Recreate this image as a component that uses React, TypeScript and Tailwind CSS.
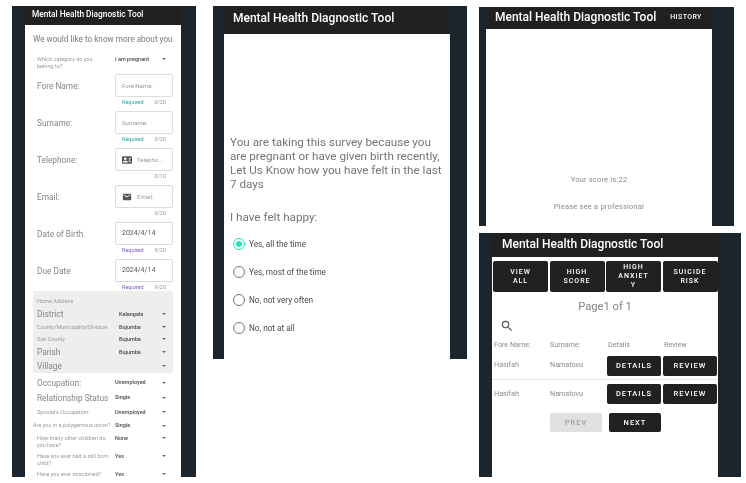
import { MdContactPhone, MdEmail, MdSearch } from "react-icons/md";
import type { ReactNode } from "react";

function Caret() {
  return <span className="h-0 w-0 border-x-[2.5px] border-t-[2.5px] border-x-transparent border-t-[#666]" />;
}

function AppBar({ title, className, extra }: { title: string; className: string; extra?: ReactNode }) {
  return (
    <div className={`flex shrink-0 items-center bg-[#212121] font-medium text-white ${className}`}>
      <span>{title}</span>
      {extra}
    </div>
  );
}

function InputRow({
  label,
  placeholder,
  icon,
  value,
  count = "0/20",
  required,
  purple,
}: {
  label: string;
  placeholder?: string;
  icon?: ReactNode;
  value?: string;
  count?: string;
  required?: boolean;
  purple?: boolean;
}) {
  return (
    <div className="h-[37px] shrink-0 pl-[12px]">
      <div className="flex items-start">
        <span className="w-[78px] pt-[6px] text-[8.3px] leading-[12px] text-[#858585]">{label}</span>
        <div className="flex h-[23px] w-[58px] items-center rounded-[2px] border border-[#dcdcdc] pl-[6px]">
          {icon}
          {value ? (
            <span className="text-[7px] text-[#555]">{value}</span>
          ) : (
            <span className="truncate text-[6px] text-[#999]">{placeholder}</span>
          )}
        </div>
      </div>
      <div className="mt-[1px] flex w-[136px] pl-[85px] pr-[7px] text-[5.5px] leading-[8px]">
        {required && <span className={purple ? "text-[#7e57c2]" : "text-[#26a69a]"}>Required</span>}
        <span className="ml-auto text-[#999]">{count}</span>
      </div>
    </div>
  );
}

function SelectRow({
  label,
  value,
  h,
  big,
  grey,
  pl = "pl-[12px]",
  valueX = "w-[78px]",
  top,
}: {
  label: string;
  value?: string;
  h: string;
  big?: boolean;
  grey?: boolean;
  pl?: string;
  valueX?: string;
  top?: boolean;
}) {
  return (
    <div className={`flex shrink-0 ${top ? "items-start" : "items-center"} ${h} ${grey ? "pl-[4px] pr-[7px]" : `${pl} pr-[15px]`}`}>
      <span
        className={`shrink-0 ${grey ? "w-[82px]" : valueX} ${top ? "pr-[6px]" : "whitespace-nowrap"} ${
          big ? "text-[8.3px] leading-[12px] text-[#858585]" : "text-[5.5px] leading-[6.5px] text-[#9a9a9a]"
        }`}
      >
        {label}
      </span>
      <span className="text-[5.5px] leading-[6.5px] font-medium text-[#4a4a4a]">{value}</span>
      <span className={`ml-auto flex ${top ? "pt-[2px]" : ""}`}>
        <Caret />
      </span>
    </div>
  );
}

function FormPanel() {
  return (
    <div className="flex h-[471px] w-[184px] shrink-0 flex-col overflow-hidden bg-[#1b252d] pl-[13px] pr-[15px]">
      <AppBar title="Mental Health Diagnostic Tool" className="h-[19px] pb-[2px] pl-[7px] text-[8.3px]" />
      <div className="flex min-h-0 flex-1 flex-col bg-white">
        <p className="mt-[8px] h-[23px] shrink-0 pl-[8px] text-[8.2px] leading-[12px] text-[#7a7a7a]">
          We would like to know more about you
        </p>
        <div className="flex h-[18px] shrink-0 pl-[12px] pr-[15px]">
          <span className="w-[78px] pr-[14px] text-[5.5px] leading-[6.5px] text-[#9a9a9a]">
            Which category do you belong to?
          </span>
          <span className="text-[5.5px] leading-[6.5px] font-medium text-[#4a4a4a]">I am pregnant</span>
          <span className="ml-auto flex pt-[2px]">
            <Caret />
          </span>
        </div>
        <InputRow label="Fore Name:" placeholder="Fore Name:" required />
        <InputRow label="Surname:" placeholder="Surname:" required />
        <InputRow
          label="Telephone:"
          placeholder="Telepho..."
          count="0/10"
          icon={<MdContactPhone className="mr-[5px] size-[10px] shrink-0 text-[#555]" />}
        />
        <InputRow
          label="Email:"
          placeholder="Email:"
          icon={<MdEmail className="mr-[5px] size-[10px] shrink-0 text-[#555]" />}
        />
        <InputRow label="Date of Birth" value="2024/4/14" count="9/20" required purple />
        <InputRow label="Due Date" value="2024/4/14" count="9/20" required purple />
        <div className="mx-[8px] -mt-[5px] flex h-[82px] shrink-0 flex-col bg-[#eeeeee] pt-[6px]">
          <span className="h-[10px] pl-[4px] text-[5.5px] leading-[8px] text-[#9a9a9a]">Home Address</span>
          <SelectRow label="District" value="Kalangala" big grey h="h-[14px]" />
          <SelectRow label="County/Municipality/Division" value="Bujumba" grey h="h-[12px]" />
          <SelectRow label="Sub County" value="Bujumba" grey h="h-[12px]" />
          <SelectRow label="Parish" value="Bujumba" big grey h="h-[14px]" />
          <SelectRow label="Village" big grey h="h-[14px]" />
        </div>
        <SelectRow label="Occupation:" value="Unemployed" big h="mt-[2px] h-[15px]" />
        <SelectRow label="Relationship Status" value="Single" big h="h-[15px]" />
        <SelectRow label="Spouse's Occupation:" value="Unemployed" h="h-[14px]" />
        <SelectRow label="Are you in a polygamous union?" value="Single" h="h-[13px]" pl="pl-[8px]" valueX="w-[82px]" />
        <SelectRow label="How many other children do you have?" value="None" h="mt-[3px] h-[18px]" top />
        <SelectRow label="Have you ever had a still born child?" value="Yes" h="h-[18px]" top />
        <SelectRow label="Have you ever miscarried?" value="Yes" h="h-[6px]" />
      </div>
    </div>
  );
}

const options = ["Yes, all the time", "Yes, most of the time", "No, not very often", "No, not at all"];

function SurveyPanel() {
  return (
    <div className="flex h-[353px] w-[254px] shrink-0 flex-col bg-[#1b252d] pl-[11px] pr-[17px]">
      <AppBar title="Mental Health Diagnostic Tool" className="h-[28px] pb-[4px] pl-[9px] text-[12px]" />
      <div className="flex-1 bg-white px-[6px] pt-[101px]">
        <p className="text-[11.7px] leading-[14px] text-[#757575]">
          You are taking this survey because you are pregnant or have given birth recently, Let Us Know how you have
          felt in the last 7 days
        </p>
        <p className="mt-[19px] text-[11.7px] leading-[14px] text-[#757575]">I have felt happy:</p>
        <div className="mt-[6px] flex flex-col pl-[3px]">
          {options.map((option, i) => (
            <label key={option} className="flex h-[28px] items-center gap-[4px] text-[8.2px] text-[#4a4a4a]">
              <span
                className={`flex size-[12px] items-center justify-center rounded-full border ${
                  i === 0 ? "border-[#1de9b6]" : "border-[#757575]"
                }`}
              >
                {i === 0 && <span className="size-[6px] rounded-full bg-[#1de9b6]" />}
              </span>
              {option}
            </label>
          ))}
        </div>
      </div>
    </div>
  );
}

function ScorePanel() {
  return (
    <div className="flex h-[219px] w-[255px] flex-col bg-[#1b252d] pl-[7px] pr-[22px]">
      <AppBar
        title="Mental Health Diagnostic Tool"
        className="h-[22px] pb-[2px] pl-[9px] text-[12px]"
        extra={<span className="ml-[14px] text-[7px] tracking-[0.4px]">HISTORY</span>}
      />
      <div className="flex flex-1 flex-col items-center bg-white pt-[145px] text-[7.5px] tracking-[0.2px] text-[#8a8a8a]">
        <p>Your score is:22</p>
        <p className="mt-[16px]">Please see a professional</p>
      </div>
    </div>
  );
}

const tabs = ["VIEW\nALL", "HIGH\nSCORE", "HIGH\nANXIET\nY", "SUICIDE\nRISK"];
const rows = ["Hasifah", "Hasifah"];

function DarkButton({ label, className }: { label: string; className: string }) {
  return (
    <span
      className={`flex items-center justify-center rounded-[2px] bg-[#212121] font-medium tracking-[1px] text-white ${className}`}
    >
      {label}
    </span>
  );
}

function HistoryPanel() {
  return (
    <div className="flex h-[244px] w-[262px] flex-col bg-[#1b252d] pl-[13px] pr-[23px]">
      <AppBar title="Mental Health Diagnostic Tool" className="h-[24px] pb-[2px] pl-[10px] text-[12px]" />
      <div className="flex flex-1 flex-col bg-white">
        <div className="mt-[4px] flex gap-[1.5px] pl-[1px]">
          {tabs.map((tab) => (
            <DarkButton
              key={tab}
              label={tab}
              className="h-[31px] w-[55px] text-center text-[7px] leading-[8.7px] whitespace-pre-line"
            />
          ))}
        </div>
        <p className="mt-[5px] text-center text-[11.2px] leading-[19px] text-[#858585]">Page1 of 1</p>
        <MdSearch className="mt-[3px] ml-[8px] size-[14px] text-[#555]" />
        <div className="mt-[6px] flex h-[13px] items-center text-[7.2px] text-[#8a8a8a]">
          <span className="w-[58px] pl-[2px]">Fore Name:</span>
          <span className="w-[58px]">Surname:</span>
          <span className="w-[56px]">Details</span>
          <span>Review</span>
        </div>
        {rows.map((name, i) => (
          <div
            key={i}
            className={`flex h-[28px] items-center text-[7.2px] text-[#8a8a8a] ${i === 0 ? "border-b border-[#e6e6e6]" : ""}`}
          >
            <span className="w-[58px] pl-[2px]">{name}</span>
            <span className="w-[57px]">Namatovu</span>
            <DarkButton label="DETAILS" className="h-[20px] w-[54px] text-[7.5px]" />
            <DarkButton label="REVIEW" className="ml-[2px] h-[20px] w-[54px] text-[7.5px]" />
          </div>
        ))}
        <div className="mt-[5px] flex gap-[7px] pl-[58px]">
          <span className="flex h-[19px] w-[52px] items-center justify-center rounded-[2px] bg-[#e0e0e0] text-[7.5px] font-medium tracking-[1px] text-[#9e9e9e]">
            PREV
          </span>
          <DarkButton label="NEXT" className="h-[19px] w-[52px] text-[7.5px]" />
        </div>
      </div>
    </div>
  );
}

export default function App() {
  return (
    <div className="flex h-[483px] w-[746px] overflow-hidden bg-white pt-[6px] pl-[12px] font-['Roboto',sans-serif] blur-[0.4px]">
      <FormPanel />
      <div className="ml-[17px]">
        <SurveyPanel />
      </div>
      <div className="ml-[12px] flex flex-col gap-[7px] pt-[1px]">
        <ScorePanel />
        <HistoryPanel />
      </div>
    </div>
  );
}
